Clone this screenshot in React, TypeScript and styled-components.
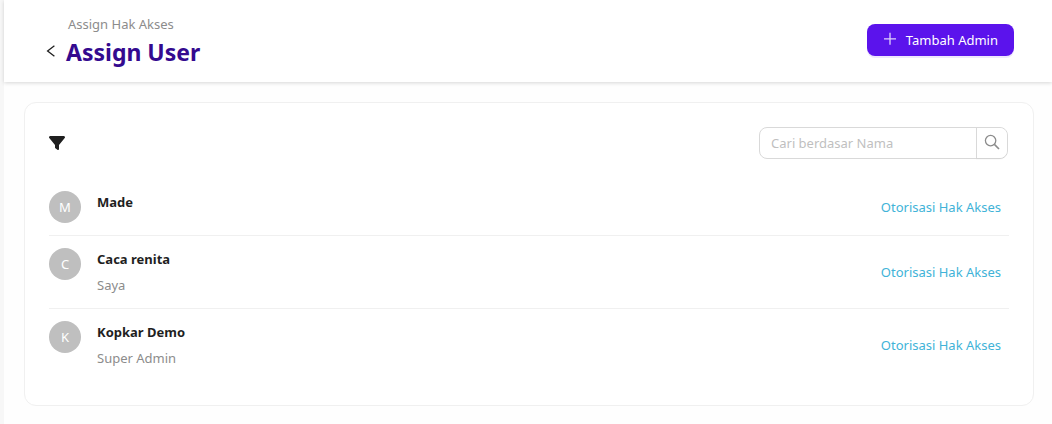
import React from "react";
import styled, { createGlobalStyle } from "styled-components";
import { FaFilter } from "react-icons/fa6";

const GlobalStyle = createGlobalStyle`
  *, *::before, *::after { box-sizing: border-box; }
  body {
    margin: 0;
    background: #fefefe;
    color: #1f1f1f;
    font-family: "Noto Sans", "Open Sans", sans-serif;
    font-size: 13px;
    line-height: 22px;
  }
  button, input { font: inherit; }
`;

const Page = styled.div`
  min-height: 100vh;
  border-left: 4px solid #f7f7f7;
`;

const Header = styled.header`
  display: flex;
  align-items: center;
  justify-content: space-between;
  padding: 13px 38px 13px 40px;
  background: #fff;
  box-shadow: 0 1px 4px rgba(0, 0, 0, 0.16);
`;

const Heading = styled.div`
  display: grid;
  grid-template-columns: 14px auto;
  column-gap: 8px;
  align-items: center;
`;

const Crumb = styled.span`
  grid-column: 2;
  padding-left: 2px;
  color: #8c8c8c;
`;

const BackButton = styled.button`
  display: flex;
  padding: 0;
  border: 0;
  background: none;
  color: #1f1f1f;
  cursor: pointer;
`;

const Title = styled.h1`
  margin: 0;
  color: #340a8f;
  font-size: 23px;
  font-weight: 700;
  line-height: 34px;
`;

const PrimaryButton = styled.button`
  display: flex;
  align-items: center;
  gap: 8px;
  height: 32px;
  margin-bottom: 2px;
  padding: 0 16px;
  border: 0;
  border-radius: 8px;
  background: #5b13ec;
  box-shadow: 0 2px 0 rgba(91, 19, 236, 0.1);
  color: #fff;
  cursor: pointer;
`;

const Card = styled.main`
  margin: 20px 18px 18px 20px;
  padding: 24px;
  border: 1px solid #f0f0f0;
  border-radius: 12px;
  background: #fff;
`;

const Toolbar = styled.div`
  display: flex;
  align-items: center;
  justify-content: space-between;
  margin-bottom: 20px;
  padding-right: 1px;
`;

const FilterButton = styled.button`
  display: flex;
  padding: 0;
  border: 0;
  background: none;
  color: #1f1f1f;
  font-size: 16px;
  cursor: pointer;
`;

const Search = styled.form`
  display: flex;
  width: 249px;
  height: 32px;
  border: 1px solid #d9d9d9;
  border-radius: 8px;
`;

const SearchInput = styled.input`
  flex: 1;
  min-width: 0;
  padding: 0 11px;
  border: 0;
  border-radius: 8px 0 0 8px;
  outline: 0;
  background: transparent;
  color: #1f1f1f;
  &::placeholder { color: #bfbfbf; opacity: 1; }
`;

const SearchButton = styled.button`
  display: grid;
  place-items: center;
  width: 31px;
  padding: 0;
  border: 0;
  border-left: 1px solid #d9d9d9;
  border-radius: 0 8px 8px 0;
  background: #fff;
  box-shadow: 0 2px 0 rgba(0, 0, 0, 0.02);
  color: #8c8c8c;
  cursor: pointer;
`;

const UserList = styled.ul`
  margin: 0;
  padding: 0;
  list-style: none;
`;

const UserRow = styled.li`
  display: flex;
  align-items: center;
  padding: 12px 0;
  border-bottom: 1px solid #f0f0f0;
  &:last-child { border-bottom: 0; }
`;

const Avatar = styled.span`
  display: grid;
  place-items: center;
  align-self: flex-start;
  width: 32px;
  height: 32px;
  margin-right: 16px;
  border-radius: 50%;
  background: #bfbfbf;
  color: #fff;
`;

const UserInfo = styled.div`
  flex: 1;
  align-self: flex-start;
`;

const UserName = styled.h2`
  margin: 0 0 4px;
  font-size: 13px;
  font-weight: 700;
  line-height: 22px;
`;

const UserRole = styled.p`
  margin: 0;
  color: #8c8c8c;
`;

const AccessLink = styled.a`
  padding: 0 8px;
  color: #41b3d8;
  text-decoration: none;
`;

const BackIcon = () => (
  <svg width="14" height="16" viewBox="0 0 14 16" stroke="currentColor" fill="none" aria-hidden="true">
    <path d="M10.4 1.8L3.6 7l6.8 5.2" strokeWidth="1.3" />
  </svg>
);

const PlusIcon = () => (
  <svg width="15" height="16" viewBox="0 0 15 16" stroke="currentColor" fill="none" aria-hidden="true">
    <path d="M1 6.8h12M7 0.8v12" strokeWidth="1.3" strokeOpacity="0.8" />
  </svg>
);

const SearchIcon = () => (
  <svg width="16" height="18" viewBox="0 0 16 18" stroke="currentColor" fill="none" aria-hidden="true">
    <circle cx="6.6" cy="6.6" r="5.2" strokeWidth="1.3" />
    <path d="M10.4 10.4l4.6 4.6" strokeWidth="1.6" />
  </svg>
);

const users = [
  { name: "Made", role: "" },
  { name: "Caca renita", role: "Saya" },
  { name: "Kopkar Demo", role: "Super Admin" },
];

export default function App() {
  return (
    <Page>
      <GlobalStyle />
      <Header>
        <Heading>
          <Crumb>Assign Hak Akses</Crumb>
          <BackButton type="button" aria-label="Kembali"><BackIcon /></BackButton>
          <Title>Assign User</Title>
        </Heading>
        <PrimaryButton type="button">
          <PlusIcon />
          <span>Tambah Admin</span>
        </PrimaryButton>
      </Header>
      <Card>
        <Toolbar>
          <FilterButton type="button" aria-label="Filter"><FaFilter /></FilterButton>
          <Search role="search" onSubmit={(e: React.FormEvent) => e.preventDefault()}>
            <SearchInput type="text" aria-label="Cari berdasar Nama" placeholder="Cari berdasar Nama" />
            <SearchButton type="submit" aria-label="Cari"><SearchIcon /></SearchButton>
          </Search>
        </Toolbar>
        <UserList>
          {users.map((user) => (
            <UserRow key={user.name}>
              <Avatar aria-hidden="true">{user.name[0]}</Avatar>
              <UserInfo>
                <UserName>{user.name}</UserName>
                {user.role && <UserRole>{user.role}</UserRole>}
              </UserInfo>
              <AccessLink href="#akses">Otorisasi Hak Akses</AccessLink>
            </UserRow>
          ))}
        </UserList>
      </Card>
    </Page>
  );
}
